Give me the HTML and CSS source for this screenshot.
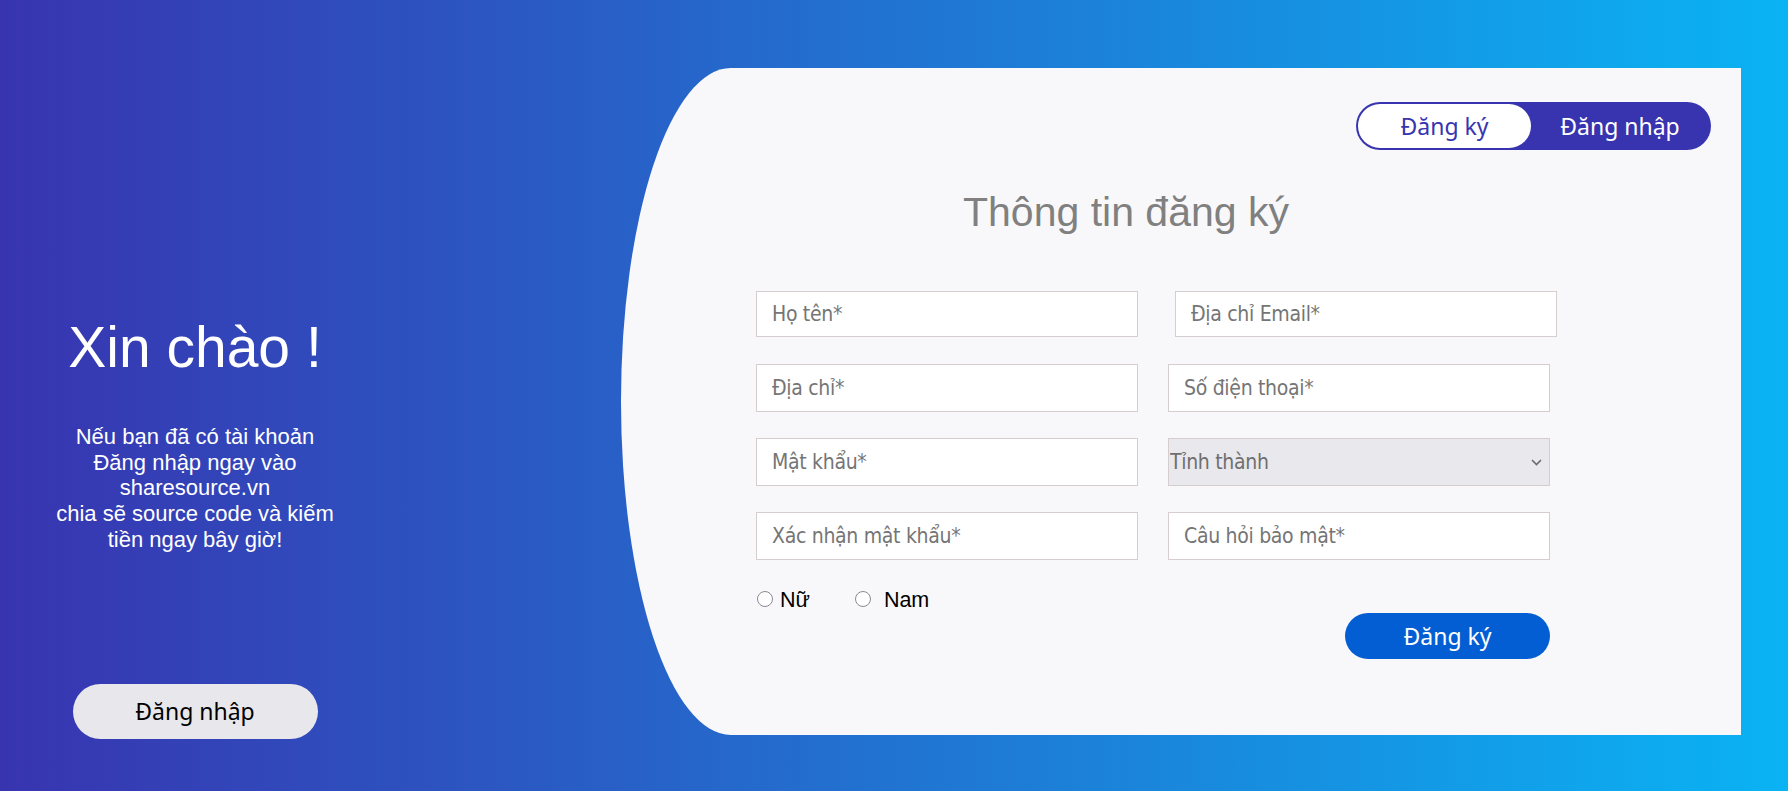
FILE: index.html
```html
<!DOCTYPE html>
<html>
<head>
  <meta charset="utf-8">
  <link rel="stylesheet" href="styles.css">
</head>
<body>
  <div class="page">
    <div class="welcome">
      <h1 class="welcome-title">Xin chào !</h1>
      <p class="welcome-text">Nếu bạn đã có tài khoản<br>Đăng nhập ngay vào<br>sharesource.vn<br>chia sẽ source code và kiếm<br>tiền ngay bây giờ!</p>
      <button class="login-btn">Đăng nhập</button>
    </div>

    <div class="card">
      <div class="switch">
        <button class="switch-item active">Đăng ký</button>
        <button class="switch-item">Đăng nhập</button>
      </div>

      <h2 class="form-title">Thông tin đăng ký</h2>

      <form class="register-form">
        <div class="form-row first">
          <input type="text" placeholder="Họ tên*">
          <input type="email" class="email" placeholder="Địa chỉ Email*">
        </div>
        <div class="form-row">
          <input type="text" placeholder="Địa chỉ*">
          <input type="text" placeholder="Số điện thoại*">
        </div>
        <div class="form-row">
          <input type="password" placeholder="Mật khẩu*">
          <div class="select-wrap">
            <select>
              <option>Tỉnh thành</option>
              <option>Hà Nội</option>
              <option>TP. Hồ Chí Minh</option>
            </select>
            <svg class="select-arrow" width="11" height="7" viewBox="0 0 11 7">
              <path d="M1 1 L5.5 5.5 L10 1" fill="none" stroke="#6b6b6b" stroke-width="1.6"/>
            </svg>
          </div>
        </div>
        <div class="form-row">
          <input type="password" placeholder="Xác nhận mật khẩu*">
          <input type="text" placeholder="Câu hỏi bảo mật*">
        </div>

        <div class="gender">
          <label class="gender-item"><input type="radio" name="gender">Nữ</label>
          <label class="gender-item"><input type="radio" name="gender"> Nam</label>
        </div>

        <button type="button" class="submit-btn">Đăng ký</button>
      </form>
    </div>
  </div>
</body>
</html>
```

FILE: styles.css
```css
html, body {
  margin: 0;
  height: 100%;
}

body {
  font-family: "Liberation Sans", Arial, sans-serif;
  background: linear-gradient(to right, #3834b0, #0ab3f3);
}

.page {
  display: flex;
  height: 791px;
}

button {
  border: none;
  cursor: pointer;
  font-family: "Noto Sans", "Open Sans", sans-serif;
}

/* left side */
.welcome {
  width: 390px;
  flex-shrink: 0;
  display: flex;
  flex-direction: column;
  align-items: center;
  padding-top: 314px;
  box-sizing: border-box;
  color: white;
}

.welcome-title {
  margin: 0;
  font-size: 57px;
  font-weight: normal;
}

.welcome-text {
  margin: 44px 0 0 0;
  font-size: 22px;
  line-height: 25.7px;
  text-align: center;
}

.login-btn {
  margin-top: 131px;
  width: 245px;
  height: 55px;
  border-radius: 28px;
  background-color: #e8e7ec;
  color: #000;
  font-size: 23px;
}

/* card */
.card {
  flex: 1;
  margin: 68px 47px 56px 231px;
  padding: 34px 30px 0 135px;
  box-sizing: border-box;
  background-color: #f8f8fa;
  border-radius: 110px 0 0 110px / 334px 0 0 334px;
  display: flex;
  flex-direction: column;
}

.switch {
  align-self: flex-end;
  display: flex;
  width: 355px;
  height: 48px;
  padding: 2px;
  box-sizing: border-box;
  background-color: #3834b0;
  border-radius: 24px;
}

.switch-item {
  flex: 1;
  background: transparent;
  color: white;
  font-size: 23px;
  padding: 0;
  border-radius: 22px;
}

.switch-item.active {
  flex: none;
  width: 173px;
  background-color: white;
  color: #3834b0;
}

.form-title {
  margin: 39px 0 0 0;
  width: 740px;
  text-align: center;
  font-size: 41px;
  font-weight: normal;
  color: #808080;
}

.register-form {
  margin-top: 55px;
  width: 794px;
  display: flex;
  flex-direction: column;
}

.form-row {
  display: flex;
  gap: 30px;
  margin-bottom: 26px;
}

.form-row.first {
  margin-bottom: 27px;
}

.form-row input,
.select-wrap select {
  flex-shrink: 0;
  width: 382px;
  height: 48px;
  margin: 0;
  padding: 0 15px;
  box-sizing: border-box;
  border: 1px solid #d6cece;
  background-color: white;
  font-family: "DejaVu Sans Condensed", "DejaVu Sans", sans-serif;
  font-size: 21px;
  letter-spacing: -0.3px;
  color: #333;
  outline: none;
}

.form-row.first input {
  height: 46px;
}

.form-row .email {
  margin-left: 7px;
}

input::placeholder {
  color: #757575;
}

.select-wrap {
  position: relative;
  width: 382px;
  height: 48px;
}

.select-wrap select {
  appearance: none;
  -webkit-appearance: none;
  padding: 0 0 0 1px;
  background-color: #e9e8ec;
  color: #6f6f6f;
  border-radius: 0;
}

.select-arrow {
  position: absolute;
  right: 8px;
  top: 21px;
  pointer-events: none;
}

.gender {
  margin-top: 2px;
  font-size: 21.5px;
  color: #000;
}

.gender-item {
  margin-right: 38px;
}

.gender-item input {
  appearance: none;
  -webkit-appearance: none;
  width: 16px;
  height: 16px;
  margin: 0 7px 0 1px;
  border: 1.5px solid #8a8a96;
  border-radius: 50%;
  background-color: white;
  vertical-align: middle;
  position: relative;
  top: -2px;
}

.submit-btn {
  align-self: flex-end;
  width: 205px;
  height: 46px;
  border-radius: 23px;
  background-color: #045ed3;
  color: white;
  font-size: 23px;
}
```
